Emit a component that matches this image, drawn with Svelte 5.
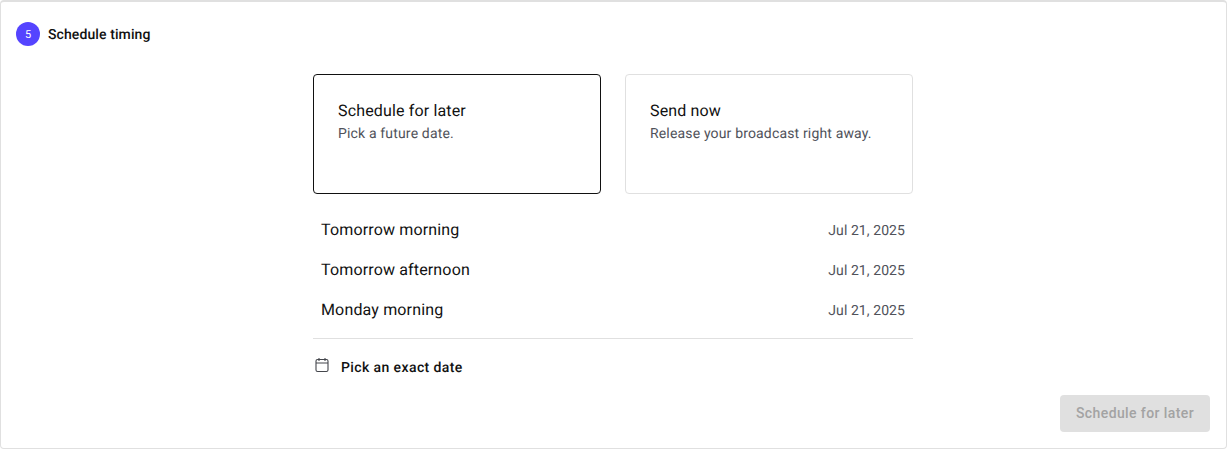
<script>
  const slots = [
    { label: 'Tomorrow morning', date: 'Jul 21, 2025' },
    { label: 'Tomorrow afternoon', date: 'Jul 21, 2025' },
    { label: 'Monday morning', date: 'Jul 21, 2025' }
  ];
</script>

<section class="panel">
  <header class="head">
    <span class="step">5</span>
    <h2>Schedule timing</h2>
  </header>
  <div class="body">
    <div class="cards">
      <div class="card active">
        <div class="title">Schedule for later</div>
        <div class="sub">Pick a future date.</div>
      </div>
      <div class="card">
        <div class="title">Send now</div>
        <div class="sub">Release your broadcast right away.</div>
      </div>
    </div>
    <ul class="slots">
      {#each slots as s}
        <li><span class="label">{s.label}</span><span class="date">{s.date}</span></li>
      {/each}
    </ul>
    <div class="exact">
      <svg width="16" height="16" viewBox="0 0 16 16" fill="none" stroke="#44464c" stroke-width="1.1">
        <rect x="2" y="2.5" width="12" height="12" rx="1.6"/>
        <path d="M2 6h12M5 1v3M11 1v3"/>
      </svg>
      <span>Pick an exact date</span>
    </div>
  </div>
  <div class="foot">
    <button disabled>Schedule for later</button>
  </div>
</section>

<style>
  :global(body) {
    margin: 0;
    background: #fff;
    font-family: Roboto, "Liberation Sans", sans-serif;
    text-rendering: geometricPrecision;
    -webkit-font-smoothing: antialiased;
  }
  .panel {
    box-sizing: border-box;
    width: 1227px;
    height: 449px;
    border: 1px solid #e0e0e0;
    border-top: 2px solid #e0e0e0;
    border-radius: 4px;
    display: flex;
    flex-direction: column;
    color: #111;
  }
  .head {
    display: flex;
    align-items: center;
    gap: 8px;
    padding: 20px 15px 0;
    height: 24px;
  }
  .step {
    width: 24px;
    height: 24px;
    border-radius: 50%;
    background: #5544ff;
    color: #fff;
    font-size: 11px;
    display: flex;
    align-items: center;
    justify-content: center;
  }
  h2 {
    margin: 0;
    padding-top: 2px;
    font-size: 14px;
    font-weight: 500;
    letter-spacing: 0.1px;
  }
  .body {
    width: 600px;
    margin: 28px 0 0 312px;
  }
  .cards {
    display: flex;
    gap: 24px;
  }
  .card {
    box-sizing: border-box;
    width: 288px;
    height: 120px;
    padding: 26px 24px;
    border: 1px solid #e0e0e0;
    border-radius: 4px;
  }
  .card.active {
    border-color: #111;
  }
  .title {
    font-size: 16px;
    line-height: 20px;
    letter-spacing: 0.15px;
  }
  .sub {
    font-size: 14px;
    line-height: 20px;
    color: #50525a;
    margin-top: 3px;
    letter-spacing: 0.16px;
  }
  .slots {
    list-style: none;
    margin: 16px 0 0;
    padding: 0 0 8px;
    border-bottom: 1px solid #e0e0e0;
  }
  .slots li {
    height: 40px;
    padding: 0 8px;
    display: flex;
    align-items: center;
    justify-content: space-between;
  }
  .label {
    font-size: 16px;
    letter-spacing: 0.15px;
    line-height: 22px;
    margin-top: -1px;
  }
  .date {
    font-size: 14px;
    line-height: 20px;
    color: #50525a;
    letter-spacing: 0.08px;
    margin-top: 1px;
  }
  .exact {
    display: flex;
    align-items: center;
    gap: 11px;
    padding: 17px 0 0;
    font-size: 14px;
    font-weight: 500;
    letter-spacing: 0.4px;
    line-height: 24px;
  }
  .exact svg {
    margin-top: -6px;
    margin-left: 1px;
  }
  .foot {
    margin-top: auto;
    display: flex;
    justify-content: flex-end;
    padding: 0 16px 16px 0;
  }
  button {
    width: 150px;
    height: 37px;
    border: 0;
    border-radius: 4px;
    background: #e0e0e0;
    color: #a3a3a3;
    font-family: inherit;
    font-size: 14px;
    font-weight: 500;
    letter-spacing: 0.4px;
    padding: 0 0 1px;
  }
</style>
